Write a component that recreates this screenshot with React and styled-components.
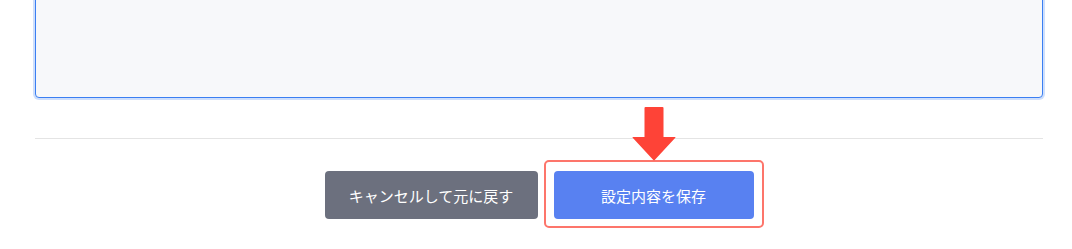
import React from 'react';
import styled, { createGlobalStyle } from 'styled-components';

const GlobalStyle = createGlobalStyle`
  html, body {
    margin: 0;
    padding: 0;
    background: #ffffff;
    overflow: hidden;
  }

  body {
    font-family: "Noto Sans CJK JP", "Noto Sans", sans-serif;
  }
`;

const Page = styled.div`
  display: flex;
  flex-direction: column;
  padding: 0 29px 0 35px;
  height: 249px;
  box-sizing: border-box;
`;

const Editor = styled.textarea`
  display: block;
  width: 100%;
  height: 118px;
  margin-top: -20px;
  box-sizing: border-box;
  resize: none;
  outline: none;

  background: #f7f8fa;
  border: 1px solid #3b7ff2;
  border-radius: 4px;
  box-shadow: 0 0 0 2px rgba(59, 127, 242, 0.25);
`;

const Divider = styled.hr`
  margin: 40px 0 0;
  border: none;
  border-top: 1px solid #e4e4e4;
  height: 0;
`;

const Actions = styled.div`
  display: flex;
  justify-content: center;
  gap: 16px;
  margin-top: 32px;
`;

const Button = styled.button`
  height: 48px;
  width: ${props => props.$width}px;
  border: none;
  border-radius: 4px;
  background: ${props => (props.$primary ? '#5881f1' : '#6c707e')};
  color: #ffffff;
  font-family: "Noto Sans CJK JP", "Noto Sans", sans-serif;
  font-size: 15px;
  letter-spacing: 0;
  cursor: pointer;
`;

const Highlighted = styled.div`
  position: relative;
  display: flex;
`;

const Ring = styled.span`
  position: absolute;
  top: -11px;
  left: -10px;
  right: -10px;
  bottom: -9px;
  border: 2px solid #fd756b;
  border-radius: 5px;
  pointer-events: none;
`;

const Pointer = styled.svg`
  position: absolute;
  top: -64px;
  left: 50%;
  transform: translateX(-50%);
  width: 44px;
  height: 54px;
  pointer-events: none;
`;

export default function App() {
  return (
    <>
      <GlobalStyle />
      <Page>
        <Editor defaultValue="" />
        <Divider />
        <Actions>
          <Button $width={213}>キャンセルして元に戻す</Button>
          <Highlighted>
            <Button $primary $width={200}>設定内容を保存</Button>
            <Ring />
            <Pointer viewBox="0 0 44 54">
              <path
                d="M12.5 1 Q12.5 0 13.5 0 L30.5 0 Q31.5 0 31.5 1 L31.5 30 L43 30 Q44 30 43.3 30.8 L22.7 53 Q22 53.6 21.3 53 L0.7 30.8 Q0 30 1 30 L12.5 30 Z"
                fill="#fe4337"
              />
            </Pointer>
          </Highlighted>
        </Actions>
      </Page>
    </>
  );
}
